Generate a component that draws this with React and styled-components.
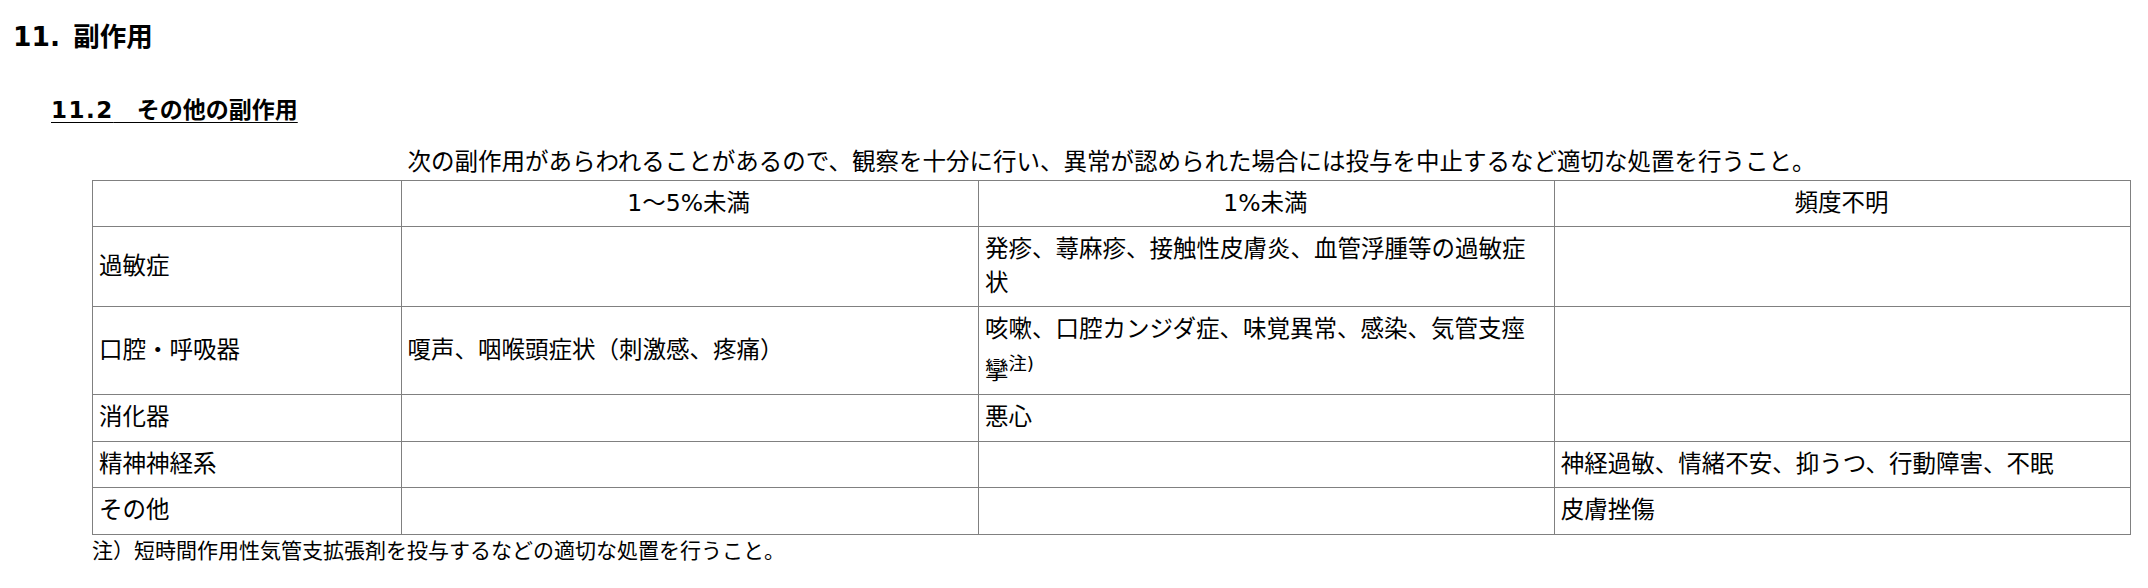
import React from "react";
import styled, { createGlobalStyle } from "styled-components";

const GlobalStyle = createGlobalStyle`
  html, body {
    margin: 0;
    padding: 0;
    background: #ffffff;
  }
  body {
    font-family: "DejaVu Sans", "Noto Sans CJK JP", sans-serif;
    color: #000000;
  }
`;

const Page = styled.main`
  padding: 19px 17px 0 13px;
`;

const Title = styled.h1`
  margin: 0;
  font-size: 26.5px;
  line-height: 36px;
  font-weight: 700;
  word-spacing: 4px;
`;

const Subtitle = styled.h2`
  margin: 38px 0 0 38px;
  font-size: 23px;
  line-height: 34px;
  font-weight: 700;
  text-decoration: underline;
  text-decoration-thickness: 1px;
  text-underline-offset: 4px;
`;

const SectionNo = styled.span`
  letter-spacing: 1.5px;
`;

const Block = styled.section`
  margin: 19px 0 0 79px;
`;

const Table = styled.table`
  width: 100%;
  border-collapse: collapse;
  table-layout: fixed;
  font-size: 23.5px;
  line-height: 33.5px;
`;

const Caption = styled.caption`
  text-align: center;
  caption-side: top;
`;

const HeadCell = styled.th`
  border: 1px solid #808080;
  padding: 6px 8px 6px 6px;
  font-weight: 400;
  text-align: center;
  vertical-align: middle;
`;

const Cell = styled.td`
  border: 1px solid #808080;
  padding: 6px 8px 6px 6px;
  text-align: left;
  vertical-align: middle;
`;

const Note = styled.sup`
  font-size: 0.78em;
  vertical-align: 0.5em;
`;

const Footnote = styled.p`
  margin: 1px 0 0;
  font-size: 21px;
  line-height: 31px;
`;

const columns = ["", "1～5%未満", "1%未満", "頻度不明"];

const rows = [
  { name: "過敏症", cells: ["", "発疹、蕁麻疹、接触性皮膚炎、血管浮腫等の過敏症状", ""] },
  {
    name: "口腔・呼吸器",
    cells: [
      "嗄声、咽喉頭症状（刺激感、疼痛）",
      <>
        咳嗽、口腔カンジダ症、味覚異常、感染、気管支痙攣<Note>注)</Note>
      </>,
      "",
    ],
  },
  { name: "消化器", cells: ["", "悪心", ""] },
  { name: "精神神経系", cells: ["", "", "神経過敏、情緒不安、抑うつ、行動障害、不眠"] },
  { name: "その他", cells: ["", "", "皮膚挫傷"] },
];

export default function App() {
  return (
    <>
      <GlobalStyle />
      <Page>
        <Title>11. 副作用</Title>
        <Subtitle>
          <SectionNo>11.2</SectionNo>　その他の副作用
        </Subtitle>
        <Block>
          <Table>
            <Caption>
              次の副作用があらわれることがあるので、観察を十分に行い、異常が認められた場合には投与を中止するなど適切な処置を行うこと。
            </Caption>
            <colgroup>
              <col style={{ width: "15.14%" }} />
              <col style={{ width: "28.33%" }} />
              <col style={{ width: "28.26%" }} />
              <col style={{ width: "28.27%" }} />
            </colgroup>
            <thead>
              <tr>
                {columns.map((c, i) => (
                  <HeadCell key={i}>{c}</HeadCell>
                ))}
              </tr>
            </thead>
            <tbody>
              {rows.map((r) => (
                <tr key={r.name}>
                  <Cell>{r.name}</Cell>
                  {r.cells.map((c, i) => (
                    <Cell key={i}>{c}</Cell>
                  ))}
                </tr>
              ))}
            </tbody>
          </Table>
          <Footnote>注）短時間作用性気管支拡張剤を投与するなどの適切な処置を行うこと。</Footnote>
        </Block>
      </Page>
    </>
  );
}
